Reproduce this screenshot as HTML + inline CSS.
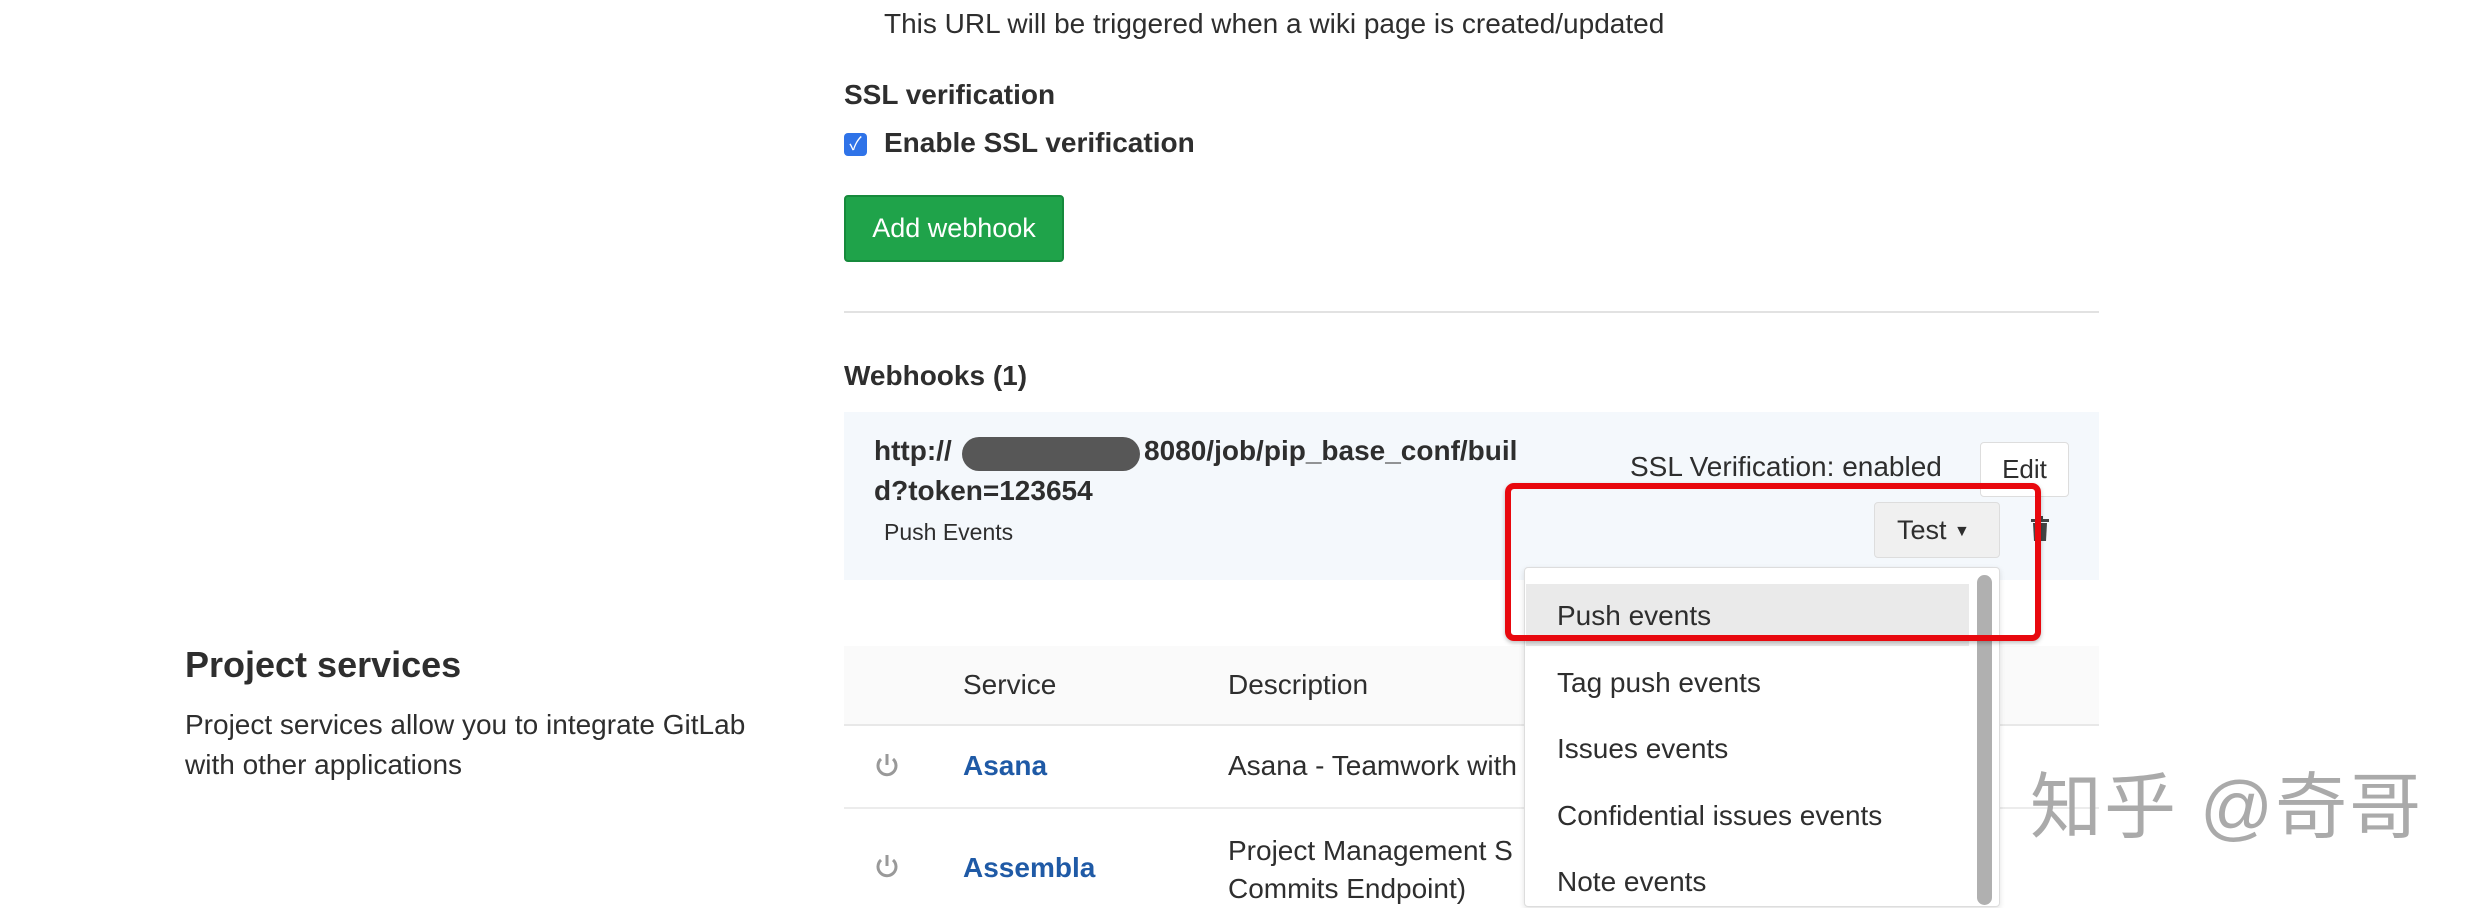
<!DOCTYPE html>
<html><head><meta charset="utf-8"><style>
*{margin:0;padding:0;box-sizing:border-box}
body{width:2484px;height:896px;overflow:hidden;background:#fff;font-family:"Liberation Sans","Noto Sans CJK SC",sans-serif;color:#2e2e2e;position:relative}
.a{position:absolute;white-space:nowrap}
.t{font-size:28px}
</style></head><body>
<div class="a t" style="left:884px;top:8px">This URL will be triggered when a wiki page is created/updated</div>
<div class="a t" style="left:844px;top:79px;font-weight:bold;color:#2e2e2e">SSL verification</div>
<div class="a" style="left:844px;top:133px;width:23px;height:23px;background:#2f73e8;border-radius:4px;color:#fff;font-size:18px;text-align:center;line-height:23px">✓</div>
<div class="a t" style="left:884px;top:127px;font-weight:bold">Enable SSL verification</div>
<div class="a" style="left:844px;top:195px;width:220px;height:67px;background:#1fa34a;border:2px solid #168a3c;border-radius:4px;color:#fff;font-size:27px;line-height:63px;text-align:center">Add webhook</div>
<div class="a" style="left:844px;top:311px;width:1255px;height:2px;background:#e2e2e2"></div>
<div class="a t" style="left:844px;top:360px;font-weight:bold">Webhooks (1)</div>
<div class="a" style="left:844px;top:412px;width:1255px;height:168px;background:#f4f8fc"></div>
<div class="a t" style="left:874px;top:435px;font-weight:bold">http://</div>
<div class="a t" style="left:1144px;top:435px;font-weight:bold">8080/job/pip_base_conf/buil</div>
<div class="a t" style="left:874px;top:475px;font-weight:bold">d?token=123654</div>
<div class="a" style="left:962px;top:437px;width:178px;height:34px;background:#575757;border-radius:17px"></div>
<div class="a" style="left:884px;top:519px;font-size:23px">Push Events</div>
<div class="a t" style="left:1630px;top:451px">SSL Verification: enabled</div>
<div class="a" style="left:1980px;top:442px;width:89px;height:55px;background:#fff;border:1px solid #ddd;border-radius:4px;font-size:26px;text-align:center;line-height:53px">Edit</div>
<div class="a" style="left:1874px;top:502px;width:126px;height:56px;background:#f0f0f0;border:1px solid #ddd;border-radius:4px;font-size:27px;line-height:54px;padding-left:22px">Test <span style="font-size:16px;vertical-align:3px">▼</span></div>
<svg class="a" style="left:2030px;top:516px" width="20" height="26" viewBox="0 0 20 26"><rect x="1" y="3" width="18" height="3" fill="#444"/><rect x="7" y="0" width="6" height="4" fill="#444"/><path d="M3 7h14l-1 18H4z" fill="#444"/></svg>
<div class="a" style="left:844px;top:646px;width:1255px;height:80px;background:#fafafa;border-bottom:2px solid #e8e8e8"></div>
<div class="a t" style="left:963px;top:669px">Service</div>
<div class="a t" style="left:1228px;top:669px">Description</div>
<div class="a" style="left:844px;top:807px;width:1255px;height:2px;background:#ececec"></div>
<svg class="a" style="left:874px;top:752px" width="26" height="28" viewBox="0 0 26 28"><path d="M7 7a9 9 0 1 0 12 0" fill="none" stroke="#999" stroke-width="3"/><path d="M13 2v11" stroke="#999" stroke-width="3"/></svg>
<svg class="a" style="left:874px;top:853px" width="26" height="28" viewBox="0 0 26 28"><path d="M7 7a9 9 0 1 0 12 0" fill="none" stroke="#999" stroke-width="3"/><path d="M13 2v11" stroke="#999" stroke-width="3"/></svg>
<div class="a t" style="left:963px;top:750px;color:#1f5aa6;font-weight:bold">Asana</div>
<div class="a t" style="left:1228px;top:750px">Asana - Teamwork with</div>
<div class="a t" style="left:963px;top:852px;color:#1f5aa6;font-weight:bold">Assembla</div>
<div class="a t" style="left:1228px;top:832px;line-height:38px">Project Management S<br>Commits Endpoint)</div>
<div class="a" style="left:185px;top:644px;font-size:36px;font-weight:bold;color:#2e2e2e">Project services</div>
<div class="a t" style="left:185px;top:705px;line-height:40px">Project services allow you to integrate GitLab<br>with other applications</div>
<div class="a" style="left:1524px;top:567px;width:476px;height:340px;background:#fff;border:1px solid #ddd;border-radius:4px;box-shadow:0 2px 6px rgba(0,0,0,.12)"></div>
<div class="a" style="left:1526px;top:584px;width:443px;height:62px;background:#eaeaea"></div>
<div class="a" style="left:1977px;top:575px;width:15px;height:330px;background:#b0b0b0;border-radius:8px"></div>
<div class="a t" style="left:1557px;top:600px">Push events</div>
<div class="a t" style="left:1557px;top:667px">Tag push events</div>
<div class="a t" style="left:1557px;top:733px">Issues events</div>
<div class="a t" style="left:1557px;top:800px">Confidential issues events</div>
<div class="a t" style="left:1557px;top:866px">Note events</div>
<div class="a" style="left:1505px;top:483px;width:536px;height:158px;border:6px solid #e8080e;border-radius:9px;box-shadow:0 2px 4px rgba(0,0,0,.25)"></div>
<div class="a" style="left:2030px;top:748px;font-size:72px;color:#aaa;letter-spacing:2px">知乎 @奇哥</div>
</body></html>
